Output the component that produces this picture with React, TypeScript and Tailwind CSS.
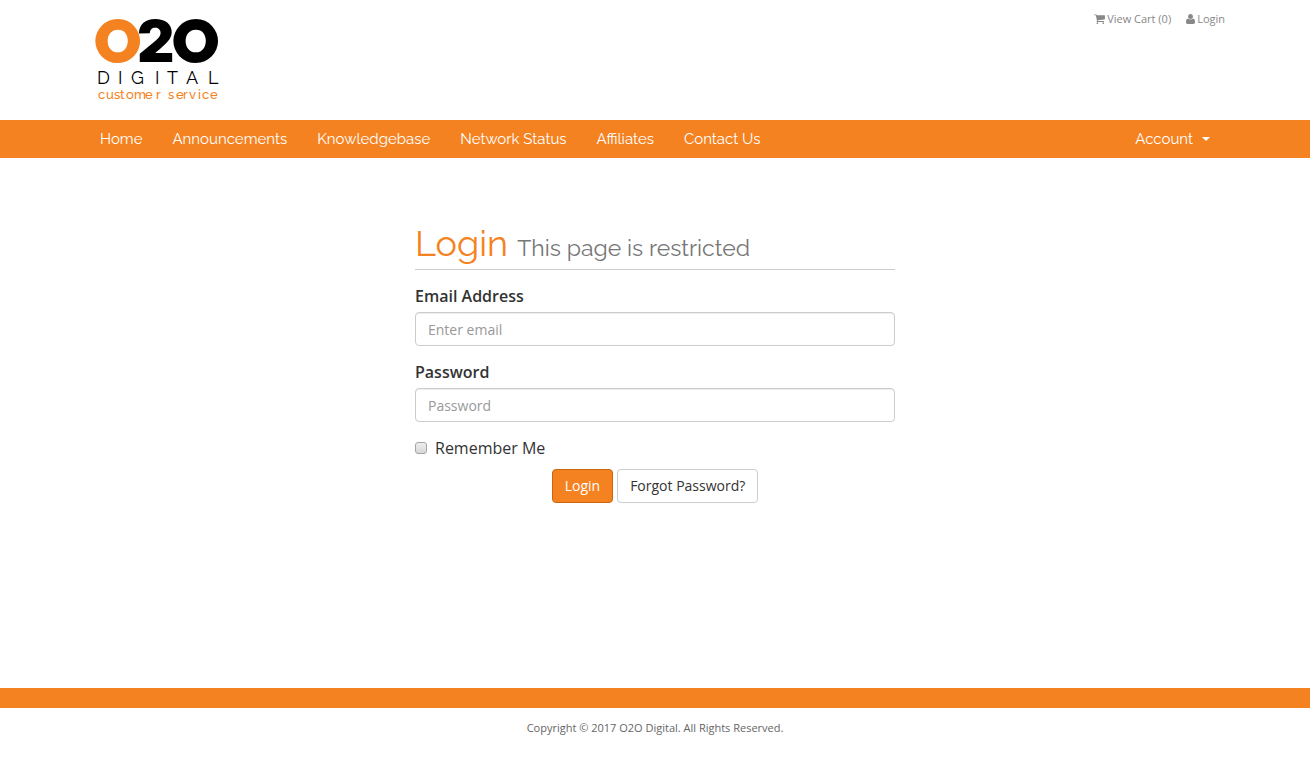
import { FC, ReactNode } from "react";

const NAV_LINKS = ["Home", "Announcements", "Knowledgebase", "Network Status", "Affiliates", "Contact Us"];

const CartIcon: FC = () => (
  <svg viewBox="0 -1408 1664 1536" className="h-[10px] w-[11px] fill-current" aria-hidden="true">
    <path
      transform="scale(1,-1)"
      d="M640 0q0 -52 -38 -90t-90 -38t-90 38t-38 90t38 90t90 38t90 -38t38 -90zM1536 0q0 -52 -38 -90t-90 -38t-90 38t-38 90t38 90t90 38t90 -38t38 -90zM1664 1152v-512q0 -24 -16.5 -42.5t-40.5 -21.5l-1044 -122q13 -60 13 -70q0 -16 -24 -64h920q26 0 45 -19t19 -45t-19 -45t-45 -19h-1024q-26 0 -45 19t-19 45q0 11 8 31.5t16 36t21.5 40t15.5 29.5l-177 823h-204q-26 0 -45 19t-19 45t19 45t45 19h256q16 0 28.5 -6.5t19.5 -15.5t13 -24.5t8 -26t5.5 -29.5t4.5 -26h1201q26 0 45 -19t19 -45z"
    />
  </svg>
);

const UserIcon: FC = () => (
  <svg viewBox="0 -1408 1408 1536" className="h-[10px] w-[9px] fill-current" aria-hidden="true">
    <path
      transform="scale(1,-1)"
      d="M1408 131q0 -120 -73 -189.5t-194 -69.5h-874q-121 0 -194 69.5t-73 189.5q0 53 3.5 103.5t14 109t26.5 108.5t43 97.5t62 81t85.5 53.5t111.5 20q9 0 42 -21.5t74.5 -48t108 -48t133.5 -21.5t133.5 21.5t108 48t74.5 48t42 21.5q61 0 111.5 -20t85.5 -53.5t62 -81t43 -97.5t26.5 -108.5t14 -109t3.5 -103.5zM1088 1024q0 -159 -112.5 -271.5t-271.5 -112.5t-271.5 112.5t-112.5 271.5t112.5 271.5t271.5 112.5t271.5 -112.5t112.5 -271.5z"
    />
  </svg>
);

const Logo: FC = () => (
  <svg viewBox="0 0 140 110" className="h-[110px] w-[140px]" role="img" aria-label="O2O Digital customer service">
    <g className="font-black">
      <text x="9" y="63" className="fill-[#f58220] font-['Raleway',sans-serif] text-[62px]">O</text>
      <text x="52" y="62" className="font-['Inter',sans-serif] text-[58px]">2</text>
      <text x="87" y="63" className="font-['Raleway',sans-serif] text-[62px]">O</text>
    </g>
    <text x="12 33 46 70 82 101 123" y="84" className="font-['Raleway',sans-serif] text-[18px]">
      DIGITAL
    </text>
    <text
      x="13 21 29 35 41 49 60 71 76 83 91 98 104 113 117 125"
      y="99"
      className="fill-[#f58220] font-['Raleway',sans-serif] text-[13px] font-medium"
    >
      customer service
    </text>
  </svg>
);

interface FieldProps {
  id: string;
  type: string;
  label: string;
  placeholder: string;
}

const Field: FC<FieldProps> = ({ id, type, label, placeholder }) => (
  <div className="mb-[15px]">
    <label htmlFor={id} className="mb-[5px] block text-base leading-[22px] font-semibold">
      {label}
    </label>
    <input
      id={id}
      type={type}
      placeholder={placeholder}
      className="block h-[34px] w-full rounded border border-[#ccc] bg-white px-3 text-sm shadow-[inset_0_1px_1px_rgba(0,0,0,0.075)] placeholder:text-[#999]"
    />
  </div>
);

const Container: FC<{ children: ReactNode; className: string }> = ({ children, className }) => (
  <div className={`mx-auto flex max-w-[1170px] justify-between px-[15px] ${className}`}>{children}</div>
);

const App: FC = () => {
  return (
    <div className="flex min-h-screen flex-col bg-white font-['Open_Sans',sans-serif] text-[#333]">
      <header>
        <Container className="items-start pb-[10px]">
          <a href="#" className="text-black">
            <Logo />
          </a>
          <div className="mt-[11px] flex gap-[15px] text-[11px] leading-4 text-[#888]">
            <a href="#" className="flex items-center gap-[2px]">
              <CartIcon />
              View Cart (0)
            </a>
            <a href="#" className="flex items-center gap-[2px]">
              <UserIcon />
              Login
            </a>
          </div>
        </Container>
      </header>

      <nav className="bg-[#f58220] font-['Raleway',sans-serif] text-[15px] leading-[38px] text-white">
        <Container className="items-center">
          <ul className="flex">
            {NAV_LINKS.map((link) => (
              <li key={link}>
                <a href="#" className="block px-[15px]">
                  {link}
                </a>
              </li>
            ))}
          </ul>
          <button type="button" className="flex items-center gap-[9px] px-[15px]">
            Account
            <span className="border-x-4 border-t-4 border-x-transparent border-t-white"></span>
          </button>
        </Container>
      </nav>

      <main className="flex-1 px-[15px] pt-[66px] pb-[60px]">
        <div className="mx-auto max-w-[480px]">
          <h1 className="mb-[15px] border-b border-[#ccc] pb-[6px] font-['Raleway',sans-serif] text-[36px] leading-[39px] text-[#f58220]">
            Login <small className="text-[23px] leading-none text-[#777]">This page is restricted</small>
          </h1>
          <form onSubmit={(e) => e.preventDefault()}>
            <Field id="email" type="email" label="Email Address" placeholder="Enter email" />
            <Field id="password" type="password" label="Password" placeholder="Password" />
            <label className="flex items-center gap-2 text-base leading-[22px]">
              <input
                type="checkbox"
                className="h-3 w-3 appearance-none rounded-[3px] border border-[#a5a5a5] bg-linear-to-b from-[#eee] to-[#d8d8d8] checked:bg-[#f58220]"
              />
              Remember Me
            </label>
            <div className="mt-[10px] flex justify-center gap-1 text-sm">
              <button type="submit" className="h-[34px] rounded border border-[#ca6510] bg-[#f58220] px-3 text-white">
                Login
              </button>
              <a href="#" className="h-[34px] rounded border border-[#ccc] bg-white px-3 leading-8">
                Forgot Password?
              </a>
            </div>
          </form>
        </div>
      </main>

      <footer className="border-t-[20px] border-[#f58220] pt-3 pb-[23px] text-center text-[11px] leading-4 text-[#666]">
        Copyright © 2017 O2O Digital. All Rights Reserved.
      </footer>
    </div>
  );
};

export default App;
